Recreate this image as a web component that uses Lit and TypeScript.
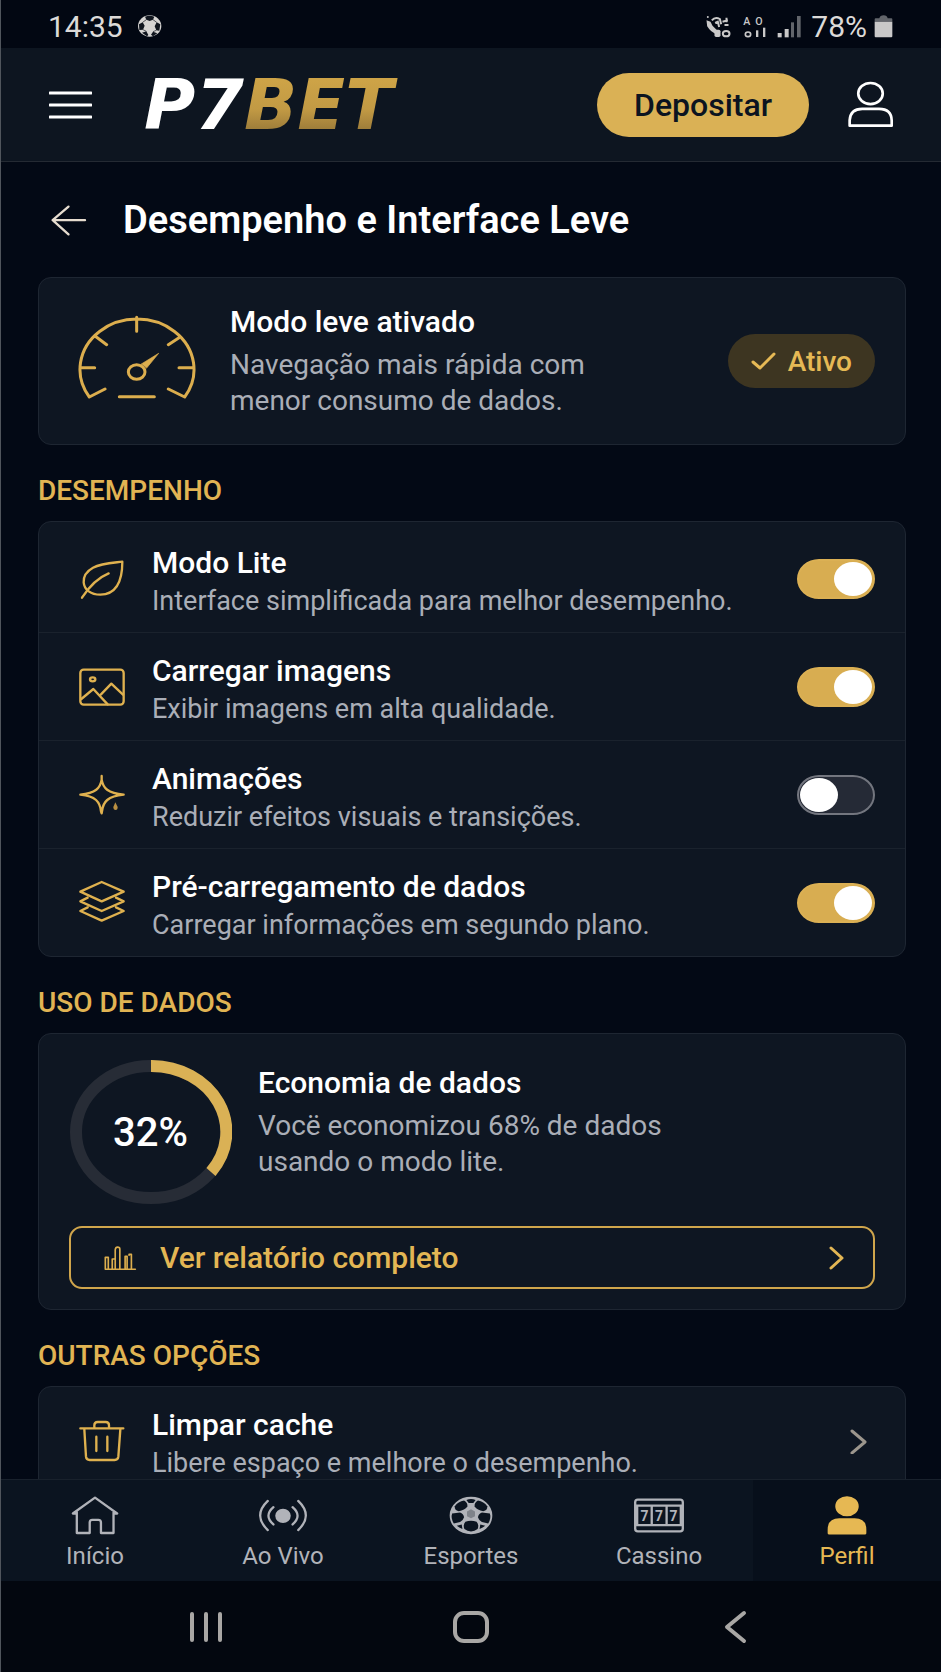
import { LitElement, html, svg, css } from "lit";
import { customElement, property, state } from "lit/decorators.js";

const icons = {
  leaf: svg`<svg class="row-icon" viewBox="233 135 144 144" aria-hidden="true">
    <path d="M366 155C330 159 302 160 278 173C258 184 249 198 250 217C252 240 272 254 300 254C342 253 366 221 366 155Z"/>
    <path d="M245 263C265 232 288 205 325 190"/></svg>`,
  image: svg`<svg class="row-icon" viewBox="233 460 144 144" aria-hidden="true">
    <rect x="240" y="480" width="130" height="105" rx="10"/>
    <ellipse cx="277" cy="509" rx="8" ry="6"/>
    <path d="M243 568L279 538L322 584M302 554L333 522L368 555"/></svg>`,
  star: svg`<svg class="row-icon" viewBox="233 783 144 144" aria-hidden="true">
    <path d="M304 798V809C308 834 322 850 370 854C322 858 308 876 305 904L304 910L302 904C299 876 286 858 240 854C286 850 300 834 304 809"/>
    <path class="spark" d="M345 877L352 891Q352 900 346 900Q339 900 339 891Z"/></svg>`,
  layers: svg`<svg class="row-icon" viewBox="233 1107 144 144" aria-hidden="true">
    <path d="M304 1116L370 1145L304 1174L240 1145ZM262 1163L240 1174L304 1203L370 1174L347 1163M262 1192L240 1203L304 1232L370 1203L347 1192"/></svg>`,
  trash: svg`<svg class="row-icon" viewBox="233 143 144 144" aria-hidden="true">
    <path d="M240 177H369M282 175V168Q282 158 292 158H316Q326 158 326 168V175M252 180L257 262Q258 272 268 272H343Q353 272 354 262L360 180M288 202V245M321 202V245"/></svg>`,
};

const navIcons = {
  home: svg`<svg class="nav-icon" viewBox="212 370 150 130" aria-hidden="true">
    <path d="M232 429H220L287 381L354 429H343M232 425V488H271V456Q271 448 279 448H297Q305 448 305 456V488H343V425"/></svg>`,
  live: svg`<svg class="nav-icon" viewBox="774 370 150 130" aria-hidden="true">
    <ellipse class="solid" cx="849" cy="436" rx="20" ry="18"/>
    <path d="M820 410Q790 436 820 462M803 391Q757 435 803 479M878 410Q908 436 878 462M895 391Q941 435 895 479"/></svg>`,
  ball: svg`<svg class="nav-icon" viewBox="136 25 150 130" aria-hidden="true">
    <ellipse class="solid" cx="211" cy="90" rx="61" ry="53"/>
    <g class="patch">
      <path d="M197 43Q211 37 225 43L218 52H204Z"/>
      <path d="M162 62Q172 48 190 45Q202 53 200 63Q192 74 174 77Q160 74 162 62Z"/>
      <path d="M260 62Q250 48 232 45Q220 53 222 63Q230 74 248 77Q262 74 260 62Z"/>
      <path d="M154 84L178 81Q188 84 190 95Q186 107 178 110L159 114Q149 98 154 84Z"/>
      <path d="M268 84L244 81Q234 84 232 95Q236 107 244 110L263 114Q273 98 268 84Z"/>
      <path d="M194 109Q211 102 228 109Q236 118 231 131Q222 138 211 138Q200 138 191 131Q186 118 194 109Z"/>
      <path d="M168 121L183 117L185 131Q175 127 168 121ZM254 121L239 117L237 131Q247 127 254 121Z"/>
      <path class="dim" d="M199 78L211 71L223 78V92L211 98L199 92Z"/>
    </g></svg>`,
  slots: svg`<svg class="nav-icon" viewBox="492 370 150 130" aria-hidden="true">
    <rect x="495" y="387" width="144" height="96" rx="8"/>
    <path d="M497 405H637M497 464H637M545 405V464M590 405V464M501 405V464M633 405V464"/>
    <g class="seven"><text x="523" y="452">7</text><text x="567" y="452">7</text><text x="611" y="452">7</text></g></svg>`,
  profile: svg`<svg class="nav-icon" viewBox="1056 370 150 130" aria-hidden="true">
    <g class="solid"><ellipse cx="1131" cy="407" rx="32" ry="27"/>
    <path d="M1076 489V478Q1076 447 1108 447H1154Q1186 447 1186 478V489Z"/></g></svg>`,
};

@customElement("setting-row")
class SettingRow extends LitElement {
  @property() name = "";
  @property() detail = "";
  @property() icon: keyof typeof icons = "leaf";
  @property({ type: Boolean }) on = false;
  @property({ type: Boolean }) link = false;

  static styles = css`
    :host { display: block; }
    .row { display: flex; align-items: center; padding: 0 30px; color: inherit; text-decoration: none; }
    .icon-cell { flex: none; width: 65px; display: grid; place-items: center; }
    .row-icon { width: 48px; height: 48px; fill: none; stroke: #dfb14f; stroke-width: 7; stroke-linecap: round; stroke-linejoin: round; }
    .spark { fill: #b98f42; stroke: none; }
    .text { flex: 1; min-width: 0; padding: 19px 0 12px 18px; line-height: 38px; }
    .name { display: block; color: #fff; font-size: 30px; font-weight: 500; }
    .detail { display: block; color: #aaaeb7; font-size: 27px; }
    .switch {
      appearance: none; flex: none; display: flex; align-items: center; box-sizing: border-box;
      width: 78px; height: 40px; margin: 0; padding: 0 1px; border: 2px solid #73767f;
      border-radius: 22px / 20px; background: #252a36; cursor: pointer;
    }
    .switch::before { content: ""; width: 38px; height: 34px; border-radius: 50%; background: #fff; }
    .switch:checked { justify-content: flex-end; border-color: #dbb054; background: #d8ad51; }
    .chevron { flex: none; width: 18px; height: 26px; margin-right: 8px; fill: none; stroke: #9c968d; stroke-width: 3; stroke-linecap: round; stroke-linejoin: round; }
  `;

  render() {
    const lead = html`<span class="icon-cell">${icons[this.icon]}</span>
      <span class="text"><span class="name">${this.name}</span><span class="detail">${this.detail}</span></span>`;
    return this.link
      ? html`<a class="row" href="#">${lead}
          <svg class="chevron" viewBox="0 0 18 26" aria-hidden="true"><path d="M3 3L16 14L3 25"/></svg></a>`
      : html`<label class="row">${lead}
          <input class="switch" type="checkbox" role="switch" .checked=${this.on}
            @change=${(e: Event) => (this.on = (e.target as HTMLInputElement).checked)} /></label>`;
  }
}

@customElement("app-root")
class AppRoot extends LitElement {
  @state() private tab = "Perfil";

  private settings = [
    { icon: "leaf", name: "Modo Lite", detail: "Interface simplificada para melhor desempenho.", on: true },
    { icon: "image", name: "Carregar imagens", detail: "Exibir imagens em alta qualidade.", on: true },
    { icon: "star", name: "Animações", detail: "Reduzir efeitos visuais e transições.", on: false },
    { icon: "layers", name: "Pré-carregamento de dados", detail: "Carregar informações em segundo plano.", on: true },
  ];

  private tabs = [
    { label: "Início", icon: navIcons.home },
    { label: "Ao Vivo", icon: navIcons.live },
    { label: "Esportes", icon: navIcons.ball },
    { label: "Cassino", icon: navIcons.slots },
    { label: "Perfil", icon: navIcons.profile },
  ];

  static styles = css`
    :host {
      display: flex; flex-direction: column; box-sizing: border-box; height: 100vh;
      border-left: 1px solid #50555c; background: #030915; color: #fff;
      font-family: Roboto, "Liberation Sans", sans-serif;
    }
    button { font: inherit; color: inherit; cursor: pointer; }
    svg { display: block; }
    .line { fill: none; stroke: #fff; stroke-linecap: round; stroke-linejoin: round; }

    .status { flex: none; display: flex; align-items: center; height: 44px; padding: 4px 48px 0 47px; background: #020712; color: #dcdad8; font-size: 30px; }
    .status-ball { width: 26px; height: 24px; margin-left: 14px; }
    .status-right { display: flex; align-items: center; gap: 10px; margin-left: auto; }
    .status-icon { height: 25px; fill: #c9c8c8; }
    .calls { width: 27px; }
    .signals { width: 25px; }
    .bars { width: 24px; }
    .battery { width: 19px; }
    .percent { margin: 0 -3px 0 0; }
    .tiny { font: 500 32px Roboto, sans-serif; }
    .faint { fill: #62656b; }
    .stroke { fill: none; stroke: #c9c8c8; }

    .top { flex: none; display: flex; align-items: center; height: 113px; padding: 0 46px 0 48px; border-bottom: 1px solid #242a33; background: #0d1520; }
    .bare { display: block; padding: 0; border: 0; background: none; }
    .menu-icon { width: 43px; height: 30px; stroke-width: 3; }
    .logo { margin-left: 52px; color: #fff; font: italic 700 70px/70px "DejaVu Sans", sans-serif; text-decoration: none; white-space: nowrap; }
    .logo-gold { padding-right: 10px; background: linear-gradient(#cda347 20%, #c29a44 55%, #8f7136 90%); background-clip: text; color: transparent; }
    .deposit { height: 64px; margin-left: auto; padding: 0 37px; border: 0; border-radius: 32px; background: #dab155; color: #0c1420; font-size: 32px; font-weight: 500; }
    .user { margin-left: 37px; }
    .user-icon { width: 49px; height: 49px; stroke-width: 8; }

    main { flex: 1; min-height: 0; overflow-y: auto; scrollbar-width: none; padding: 0 35px 0 37px; }
    .title-row { display: flex; align-items: center; gap: 36px; padding: 35px 12px 34px; }
    .back-icon { width: 37px; height: 33px; stroke: #e6dccf; stroke-width: 7; }
    h1 { margin: 0; font-size: 38px; line-height: 46px; font-weight: 600; }
    h2 { margin: 28px 0 12px; color: #e1b453; font-size: 28px; line-height: 36px; font-weight: 500; }
    h3 { margin: 0 0 6px; font-size: 30px; line-height: 38px; font-weight: 500; }
    p { margin: 0; color: #aaaeb7; font-size: 28px; line-height: 36px; }
    .card { border: 1px solid #1e2632; border-radius: 13px; background: #0e1622; }
    .mode { display: flex; align-items: center; padding: 25px 30px; }
    .gauge-cell { width: 135px; margin-right: 26px; display: grid; place-items: center; }
    .gauge { width: 121px; height: 94px; fill: none; stroke: #dcae4e; stroke-width: 9; stroke-linecap: round; stroke-linejoin: round; }
    .needle { fill: #dcae4e; stroke-width: 2; }
    .pill { display: flex; align-items: center; gap: 12px; height: 54px; margin-left: auto; padding: 0 23px; border-radius: 27px; background: #3d3521; color: #e6b955; font-size: 28px; font-weight: 500; }
    .check { width: 25px; height: 20px; stroke: #e6b955; stroke-width: 3; }
    .list { padding-top: 3px; }
    setting-row + setting-row { border-top: 1px solid #1a222d; }

    .usage { padding: 26px 30px 20px; }
    .usage-top { display: flex; align-items: flex-start; gap: 26px; margin-bottom: 21px; }
    .usage-text { padding-top: 4px; }
    .ring { flex: none; display: grid; place-items: center; }
    .ring > * { grid-area: 1 / 1; }
    .ring-art { width: 163px; height: 145px; fill: none; stroke-width: 12; }
    .track { stroke: #272c36; }
    .value { stroke: #dab155; }
    .ring-label { font-size: 40px; font-weight: 500; }
    .report { display: flex; align-items: center; box-sizing: border-box; height: 63px; padding: 0 29px 0 33px; border: 2px solid #cfa54c; border-radius: 13px; color: #e3b654; font-size: 30px; font-weight: 500; text-decoration: none; }
    .chart { width: 33px; height: 30px; margin-right: 23px; stroke: #dcae4e; stroke-width: 5; }
    .report-chevron { width: 16px; height: 24px; margin-left: auto; stroke: #e3b654; stroke-width: 3; }

    .tabs { flex: none; display: grid; grid-template-columns: repeat(5, 1fr); border-top: 1px solid #19212c; background: #0b1420; }
    .tab { display: flex; flex-direction: column; align-items: center; gap: 5px; padding: 14px 0 11px; color: #b1b3b9; font-size: 24px; line-height: 28px; text-decoration: none; }
    .tab.active { background: #070f1b; color: #e6b853; }
    .nav-icon { width: 50px; height: 43px; fill: none; stroke: currentColor; stroke-width: 7; stroke-linecap: round; stroke-linejoin: round; }
    .solid { fill: currentColor; }
    .patch { fill: #0b1420; stroke: none; }
    .dim { fill: #7f838a; }
    .seven { fill: currentColor; stroke: none; font: 700 42px Roboto, sans-serif; text-anchor: middle; }

    .system { flex: none; display: grid; grid-template-columns: repeat(3, 1fr); place-items: center; height: 91px; padding: 0 72px; background: #03070f; }
    .system-icon { width: 40px; height: 36px; stroke: #a9a7a5; stroke-width: 4; }
  `;

  render() {
    return html`
      <div class="status">
        <span>14:35</span>
        <svg class="status-ball" viewBox="410 41 78 72" aria-hidden="true">
          <ellipse cx="448" cy="77" rx="35" ry="32" fill="#d6d4d2"/>
          <path fill="#10151e" d="M434 49Q448 44 462 49L458 58L448 62L438 58ZM416 72L427 66L433 76L428 88L417 89ZM480 72L469 66L463 78L468 90L477 91ZM425 97L438 93L444 104L440 108ZM471 99L458 94L452 103L458 108Z"/>
          <path fill="none" stroke="#10151e" stroke-width="2" d="M427 66L438 58M469 66L458 58M428 88L438 93M468 90L458 94"/>
        </svg>
        <div class="status-right">
          <svg class="status-icon calls" viewBox="48 25 80 75" aria-hidden="true">
            <path d="M52 44L64 48L70 60L82 72L78 84Q64 78 54 62Z"/>
            <path class="stroke" stroke-width="6" d="M68 44Q78 32 92 40L96 56M78 52L86 48L90 64M100 48L116 44M106 58H118M112 36V50"/>
            <rect x="76" y="72" width="18" height="22" rx="5"/>
            <ellipse class="stroke" stroke-width="6" cx="111" cy="84" rx="10" ry="8"/>
            <circle cx="56" cy="34" r="3"/>
          </svg>
          <svg class="status-icon signals" viewBox="156 25 75 75" aria-hidden="true">
            <text class="tiny" x="160" y="57">A</text><text class="tiny" x="196" y="57">O</text>
            <ellipse class="stroke" stroke-width="5" cx="174" cy="86" rx="8" ry="7"/>
            <rect x="198" y="74" width="7" height="20"/><rect x="219" y="66" width="7" height="28"/>
          </svg>
          <svg class="status-icon bars" viewBox="256 25 72 75" aria-hidden="true">
            <rect x="258" y="82" width="12" height="13"/><rect x="279" y="70" width="12" height="25"/>
            <g class="faint"><rect x="298" y="50" width="9" height="45"/><rect x="316" y="31" width="11" height="64"/></g>
          </svg>
          <span class="percent">78%</span>
          <svg class="status-icon battery" viewBox="553 25 57 75" aria-hidden="true">
            <path class="faint" d="M555 48V41Q555 38 558 38H569Q571 29 582 29Q592 29 594 38H605Q608 38 608 41V48Z"/>
            <path d="M555 48H608V92Q608 95 605 95H558Q555 95 555 92Z"/>
          </svg>
        </div>
      </div>

      <header class="top">
        <button class="bare" aria-label="Menu">
          <svg class="line menu-icon" viewBox="0 0 43 30"><path d="M1 3H42M1 15H42M1 27H42"/></svg>
        </button>
        <a class="logo" href="#">P7<span class="logo-gold">BET</span></a>
        <button class="deposit">Depositar</button>
        <button class="bare user" aria-label="Conta">
          <svg class="line user-icon" viewBox="1128 243 146 148">
            <ellipse cx="1201" cy="284" rx="37" ry="32"/>
            <path d="M1138 381V365Q1140 330 1176 330H1227Q1264 330 1265 365V381Z"/>
          </svg>
        </button>
      </header>

      <main>
        <div class="title-row">
          <button class="bare" aria-label="Voltar">
            <svg class="line back-icon" viewBox="150 610 112 98"><path d="M256 658H158M206 617L158 658L206 701"/></svg>
          </button>
          <h1>Desempenho e Interface Leve</h1>
        </div>

        <section class="card mode">
          <div class="gauge-cell">
            <svg class="gauge" viewBox="228 162 363 282" aria-hidden="true">
              <path d="M315 387L268 411A171 151 0 1 1 554 411L505 387M410 172V214M286 229L320 254M537 233L505 254M240 323H284M537 323H581M358 410H463"/>
              <ellipse cx="410" cy="336" rx="25" ry="22"/>
              <path class="needle" d="M424 312L476 280L440 324Z"/>
            </svg>
          </div>
          <div>
            <h3>Modo leve ativado</h3>
            <p>Navegação mais rápida com<br />menor consumo de dados.</p>
          </div>
          <span class="pill">
            <svg class="line check" viewBox="0 0 25 20" aria-hidden="true"><path d="M2 11L9 17L23 3"/></svg>Ativo
          </span>
        </section>

        <h2>DESEMPENHO</h2>
        <section class="card list">
          ${this.settings.map((s) => html`<setting-row .icon=${s.icon as any} .name=${s.name} .detail=${s.detail} .on=${s.on}></setting-row>`)}
        </section>

        <h2>USO DE DADOS</h2>
        <section class="card usage">
          <div class="usage-top">
            <div class="ring">
              <svg class="ring-art" viewBox="0 0 163 145" aria-hidden="true">
                <ellipse class="track" cx="82" cy="72" rx="75" ry="66"/>
                <path class="value" d="M82 6A75 66 0 0 1 142 112"/>
              </svg>
              <span class="ring-label">32%</span>
            </div>
            <div class="usage-text">
              <h3>Economia de dados</h3>
              <p>Vocë economizou 68% de dados<br />usando o modo lite.</p>
            </div>
          </div>
          <a class="report" href="#">
            <svg class="line chart" viewBox="28 20 100 90" aria-hidden="true">
              <path d="M32 99V63H41V97M53 97V68H59M62 97V40Q63 32 69 32Q76 32 76 38V97M92 97V60H98V97M104 57V54H111V97M32 99H123"/>
            </svg>
            Ver relatório completo
            <svg class="line report-chevron" viewBox="0 0 16 24" aria-hidden="true"><path d="M3 2L14 12L3 22"/></svg>
          </a>
        </section>

        <h2>OUTRAS OPÇÕES</h2>
        <section class="card">
          <setting-row link .icon=${"trash"} .name=${"Limpar cache"} .detail=${"Libere espaço e melhore o desempenho."}></setting-row>
        </section>
      </main>

      <nav class="tabs">
        ${this.tabs.map((t) => html`<a class="tab ${t.label === this.tab ? "active" : ""}" href="#"
          @click=${() => (this.tab = t.label)}>${t.icon}<span>${t.label}</span></a>`)}
      </nav>

      <div class="system">
        <button class="bare" aria-label="Recentes">
          <svg class="line system-icon" viewBox="0 0 40 36"><path d="M6 5V31M20 5V31M34 5V31"/></svg>
        </button>
        <button class="bare" aria-label="Tela inicial">
          <svg class="line system-icon" viewBox="0 0 40 36"><rect x="4" y="4" width="32" height="28" rx="9"/></svg>
        </button>
        <button class="bare" aria-label="Anterior">
          <svg class="line system-icon" viewBox="0 0 40 36"><path d="M28 4L11 18L28 32"/></svg>
        </button>
      </div>
    `;
  }
}
